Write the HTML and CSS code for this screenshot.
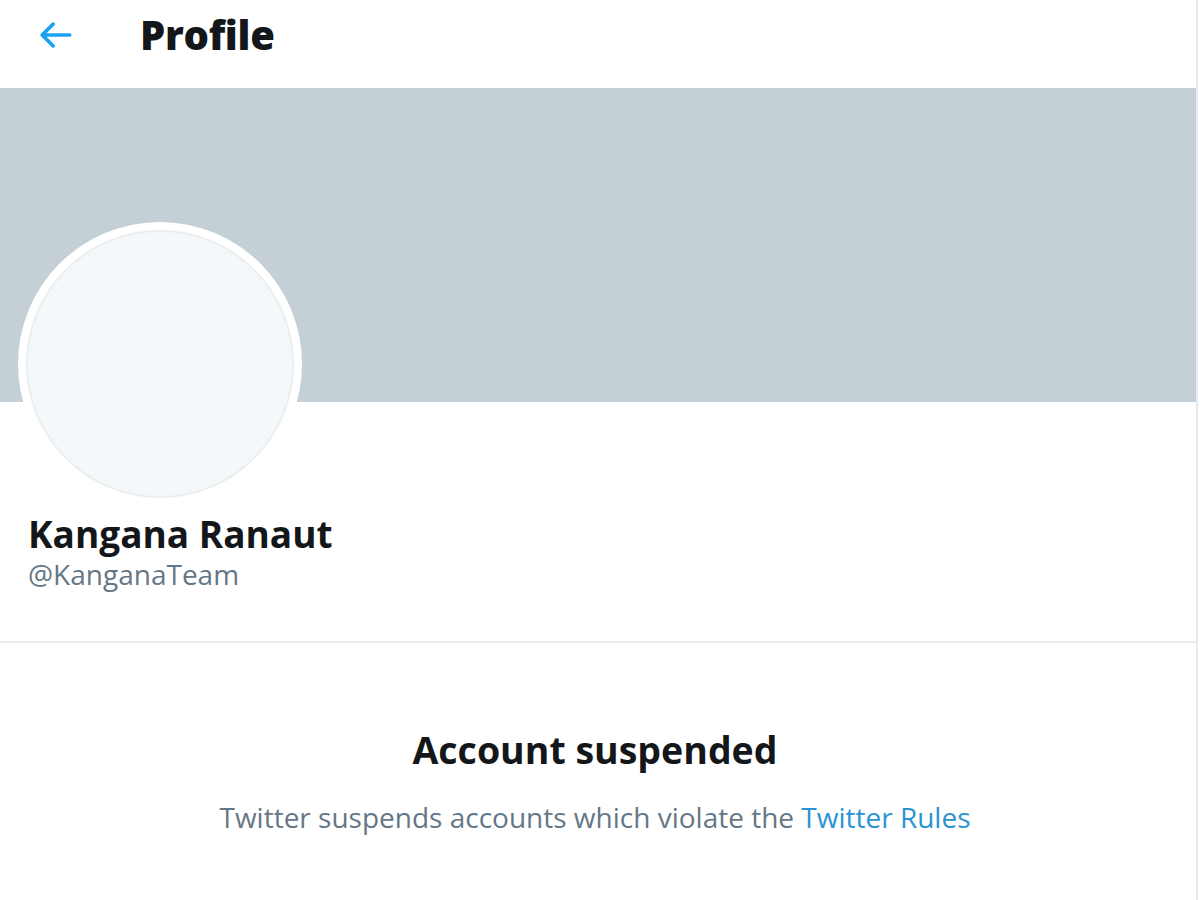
FILE: index.html
```html
<!doctype html>
<html lang="en">

<head>
    <meta charset="utf-8">
    <meta name="viewport" content="width=device-width, initial-scale=1">
    <title>Kangana Ranaut (@KanganaTeam) / Twitter</title>
    <link rel="stylesheet" href="styles.css">
</head>

<body>
<main class="column">
    <header class="top-bar">
        <a class="back-button" href="#" aria-label="Back">
            <svg viewBox="0 0 24 24" aria-hidden="true">
                <path d="M20 11H7.414l4.293-4.293c.39-.39.39-1.023 0-1.414s-1.023-.39-1.414 0l-6 6c-.39.39-.39 1.023 0 1.414l6 6c.195.195.45.293.707.293s.512-.098.707-.293c.39-.39.39-1.023 0-1.414L7.414 13H20c.553 0 1-.447 1-1s-.447-1-1-1z"/>
            </svg>
        </a>
        <h1 class="top-title">Profile</h1>
    </header>

    <div class="banner"></div>

    <section class="profile">
        <div class="avatar">
            <div class="avatar-inner"></div>
        </div>
        <h2 class="profile-name">Kangana Ranaut</h2>
        <div class="profile-handle">@KanganaTeam</div>
    </section>

    <section class="notice">
        <h2 class="notice-title">Account suspended</h2>
        <p class="notice-text">Twitter suspends accounts which violate the <a href="#">Twitter Rules</a></p>
    </section>
</main>
</body>
</html>
```

FILE: styles.css
```css
:root {
    /* Colors */
    --color-text: #14171a;
    --color-muted: #657786;
    --color-link: #2a93d2;
    --color-accent: #1da1f2;
    --color-border: #e6ecf0;
    --color-banner: #c4cfd6;
    --color-avatar: #f5f8fa;

    /* Typography */
    --font-stack: "Open Sans", "Noto Sans", sans-serif;
}

*, *::before, *::after {
    box-sizing: border-box;
}

body {
    margin: 0;
    background: #fff;
    color: var(--color-text);
    font-family: var(--font-stack);
}

.column {
    width: 1198px;
    min-height: 900px;
    border-right: 2px solid var(--color-border);
}

.top-bar {
    display: flex;
    align-items: center;
    height: 88px;
    padding-left: 33px;
}

.back-button {
    display: flex;
    width: 44px;
    height: 44px;
    margin-top: -18px;
}

.back-button svg {
    width: 100%;
    height: 100%;
    fill: var(--color-accent);
}

.top-title {
    margin: -18px 0 0 63px;
    font-size: 40px;
    font-weight: 800;
    line-height: 1;
    letter-spacing: -0.3px;
}

.banner {
    height: 314px;
    background: var(--color-banner);
}

.profile {
    padding: 0 28px 52px;
    border-bottom: 2px solid var(--color-border);
}

.avatar {
    width: 284px;
    height: 284px;
    margin: -180px 0 0 -10px;
    padding: 8px;
    border-radius: 50%;
    background: #fff;
}

.avatar-inner {
    width: 100%;
    height: 100%;
    border: 2px solid #ebeeef;
    border-radius: 50%;
    background: var(--color-avatar);
}

.profile-name {
    margin: 7px 0 0;
    font-size: 37px;
    font-weight: 700;
    line-height: 1.15;
}

.profile-handle {
    margin-top: 3px;
    color: var(--color-muted);
    font-size: 28px;
    line-height: 1.1;
}

.notice {
    padding: 84px 6px 0 0;
    text-align: center;
}

.notice-title {
    margin: 0;
    font-size: 37.5px;
    font-weight: 700;
    line-height: 1.2;
}

.notice-text {
    margin: 29px 0 0;
    color: var(--color-muted);
    font-size: 28px;
    line-height: 1.2;
}

.notice-text a {
    color: var(--color-link);
    text-decoration: none;
}
```
